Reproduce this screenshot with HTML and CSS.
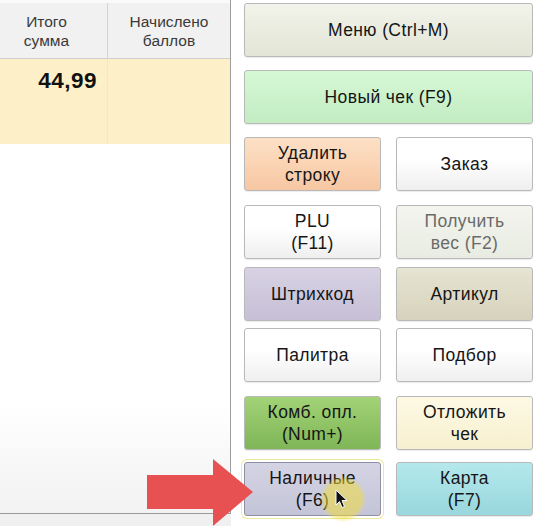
FILE: index.html
```html
<!DOCTYPE html>
<html>
<head>
<meta charset="utf-8">
<link rel="stylesheet" href="styles.css">
</head>
<body>
<div class="screen">
  <div class="left">
    <div class="topstrip"></div>
    <div class="thead">
      <div class="th c1">Итого<br>сумма</div>
      <div class="th c2">Начислено<br>баллов</div>
    </div>
    <div class="trow">
      <div class="td c1"><span class="sum">44,99</span></div>
      <div class="td c2"></div>
    </div>
    <div class="empty"></div>
  </div>
  <div class="right">
    <div class="btn wide b-menu r1">Меню (Ctrl+M)</div>
    <div class="btn wide b-new r2">Новый чек (F9)</div>
    <div class="btn b-del r3">Удалить<br>строку</div>
    <div class="btn b-white r3">Заказ</div>
    <div class="btn b-white r4">PLU<br>(F11)</div>
    <div class="btn b-dis r4">Получить<br>вес (F2)</div>
    <div class="btn b-bar r5">Штрихкод</div>
    <div class="btn b-art r5">Артикул</div>
    <div class="btn b-white r6">Палитра</div>
    <div class="btn b-white r6">Подбор</div>
    <div class="btn b-comb r7">Комб. опл.<br>(Num+)</div>
    <div class="btn b-post r7">Отложить<br>чек</div>
    <div class="btn b-cash r8">Наличные<br>(F6)</div>
    <div class="btn b-card r8">Карта<br>(F7)</div>
  </div>
</div>
<svg class="arrow" width="108" height="70" viewBox="0 0 108 70"><polygon points="0,16 66,16 66,0 106,33 66,67 66,50 0,50" fill="#e85151"/></svg>
<div class="glow"></div>
<svg class="cursor" width="14" height="20" viewBox="0 0 14 20"><path d="M1,1 L1,16 L4.5,12.5 L7,18.5 L9.5,17.5 L7,11.5 L12,11.5 Z" fill="#111" stroke="#fff" stroke-width="1"/></svg>
</body>
</html>
```
FILE: styles.css
```css
html, body {
  margin: 0;
  padding: 0;
  background: #ffffff;
  font-family: "Liberation Sans", Arial, sans-serif;
}
.screen {
  display: flex;
  width: 544px;
  height: 526px;
  overflow: hidden;
}
.left {
  width: 230px;
  height: 513px;
  border-right: 1px solid #9e9e9e;
  border-bottom: 1px solid #9a9a9a;
  display: flex;
  flex-direction: column;
  flex-shrink: 0;
  box-shadow: 0 12px 0 #f0f0f0;
}
.topstrip {
  height: 3px;
  background: #fafafa;
}
.thead {
  display: flex;
  height: 55px;
  background: #f1f1f1;
  border-bottom: 1px solid #cfcfcf;
}
.th {
  color: #3a3a3a;
  font-size: 15.5px;
  line-height: 19px;
  text-align: center;
  padding-top: 9px;
  box-sizing: border-box;
}
.c1 {
  width: 108px;
  border-right: 1px solid #d4d4d4;
}
.thead .c1 {
  padding-right: 14px;
}
.c2 {
  flex: 1;
}
.trow {
  display: flex;
  height: 85px;
  background: #fdf0c9;
}
.td {
  box-sizing: border-box;
}
.trow .c1 {
  border-right: 1px solid #f6e6bd;
  text-align: right;
  padding-right: 10px;
  padding-top: 9px;
}
.sum {
  font-weight: bold;
  font-size: 22.5px;
  letter-spacing: 0.5px;
  color: #111;
}
.empty {
  flex: 1;
  background: linear-gradient(#ffffff 0%, #ffffff 70%, #f2f2f2 100%);
}
.right {
  display: grid;
  grid-template-columns: 137px 137px;
  column-gap: 15px;
  grid-template-rows: 67px 67px 68px 62px 61px 68px 66px 60px;
  padding-left: 13px;
  padding-top: 3px;
  align-items: start;
}
.btn {
  box-sizing: border-box;
  height: 54px;
  border: 1px solid #b9b9b9;
  border-radius: 3px;
  display: flex;
  align-items: center;
  justify-content: center;
  text-align: center;
  font-size: 17.5px;
  letter-spacing: 0.4px;
  line-height: 22px;
  color: #151515;
  box-shadow: 0 1px 1px rgba(0,0,0,0.08);
}
.wide {
  grid-column: 1 / 3;
}
.b-menu { background: linear-gradient(#f2f3ea, #e3e5d6); }
.b-new { background: linear-gradient(#d5f8d5, #c3ecc3); }
.b-del { background: linear-gradient(#fde0c6, #f7c7a2); }
.b-white { background: linear-gradient(#ffffff 40%, #efefef); }
.b-dis { background: linear-gradient(#f3f5ee, #e9ece2); color: #6a6a6a; }
.b-bar { background: linear-gradient(#d8d2e4, #c6bfd6); }
.b-art { background: linear-gradient(#e6e4d2, #d6d2bc); }
.b-comb { background: linear-gradient(#a2d377, #7fb657); }
.b-post { background: linear-gradient(#fdf9e4, #f7efcf); }
.b-cash {
  background: linear-gradient(#d4d4e4, #c4c4d8);
  border-color: #8f8f9f;
  box-shadow: 0 0 0 2px #ffffff, 0 0 0 3px #efe79a;
}
.b-card { background: linear-gradient(#b4e8ec, #98d7dd); }
.arrow {
  position: absolute;
  left: 147px;
  top: 459px;
}
.glow {
  position: absolute;
  left: 320px;
  top: 476px;
  width: 46px;
  height: 46px;
  border-radius: 50%;
  background: radial-gradient(rgba(240,220,60,0.55) 55%, rgba(240,220,60,0.0) 72%);
}
.cursor {
  position: absolute;
  left: 335px;
  top: 489px;
}
```
